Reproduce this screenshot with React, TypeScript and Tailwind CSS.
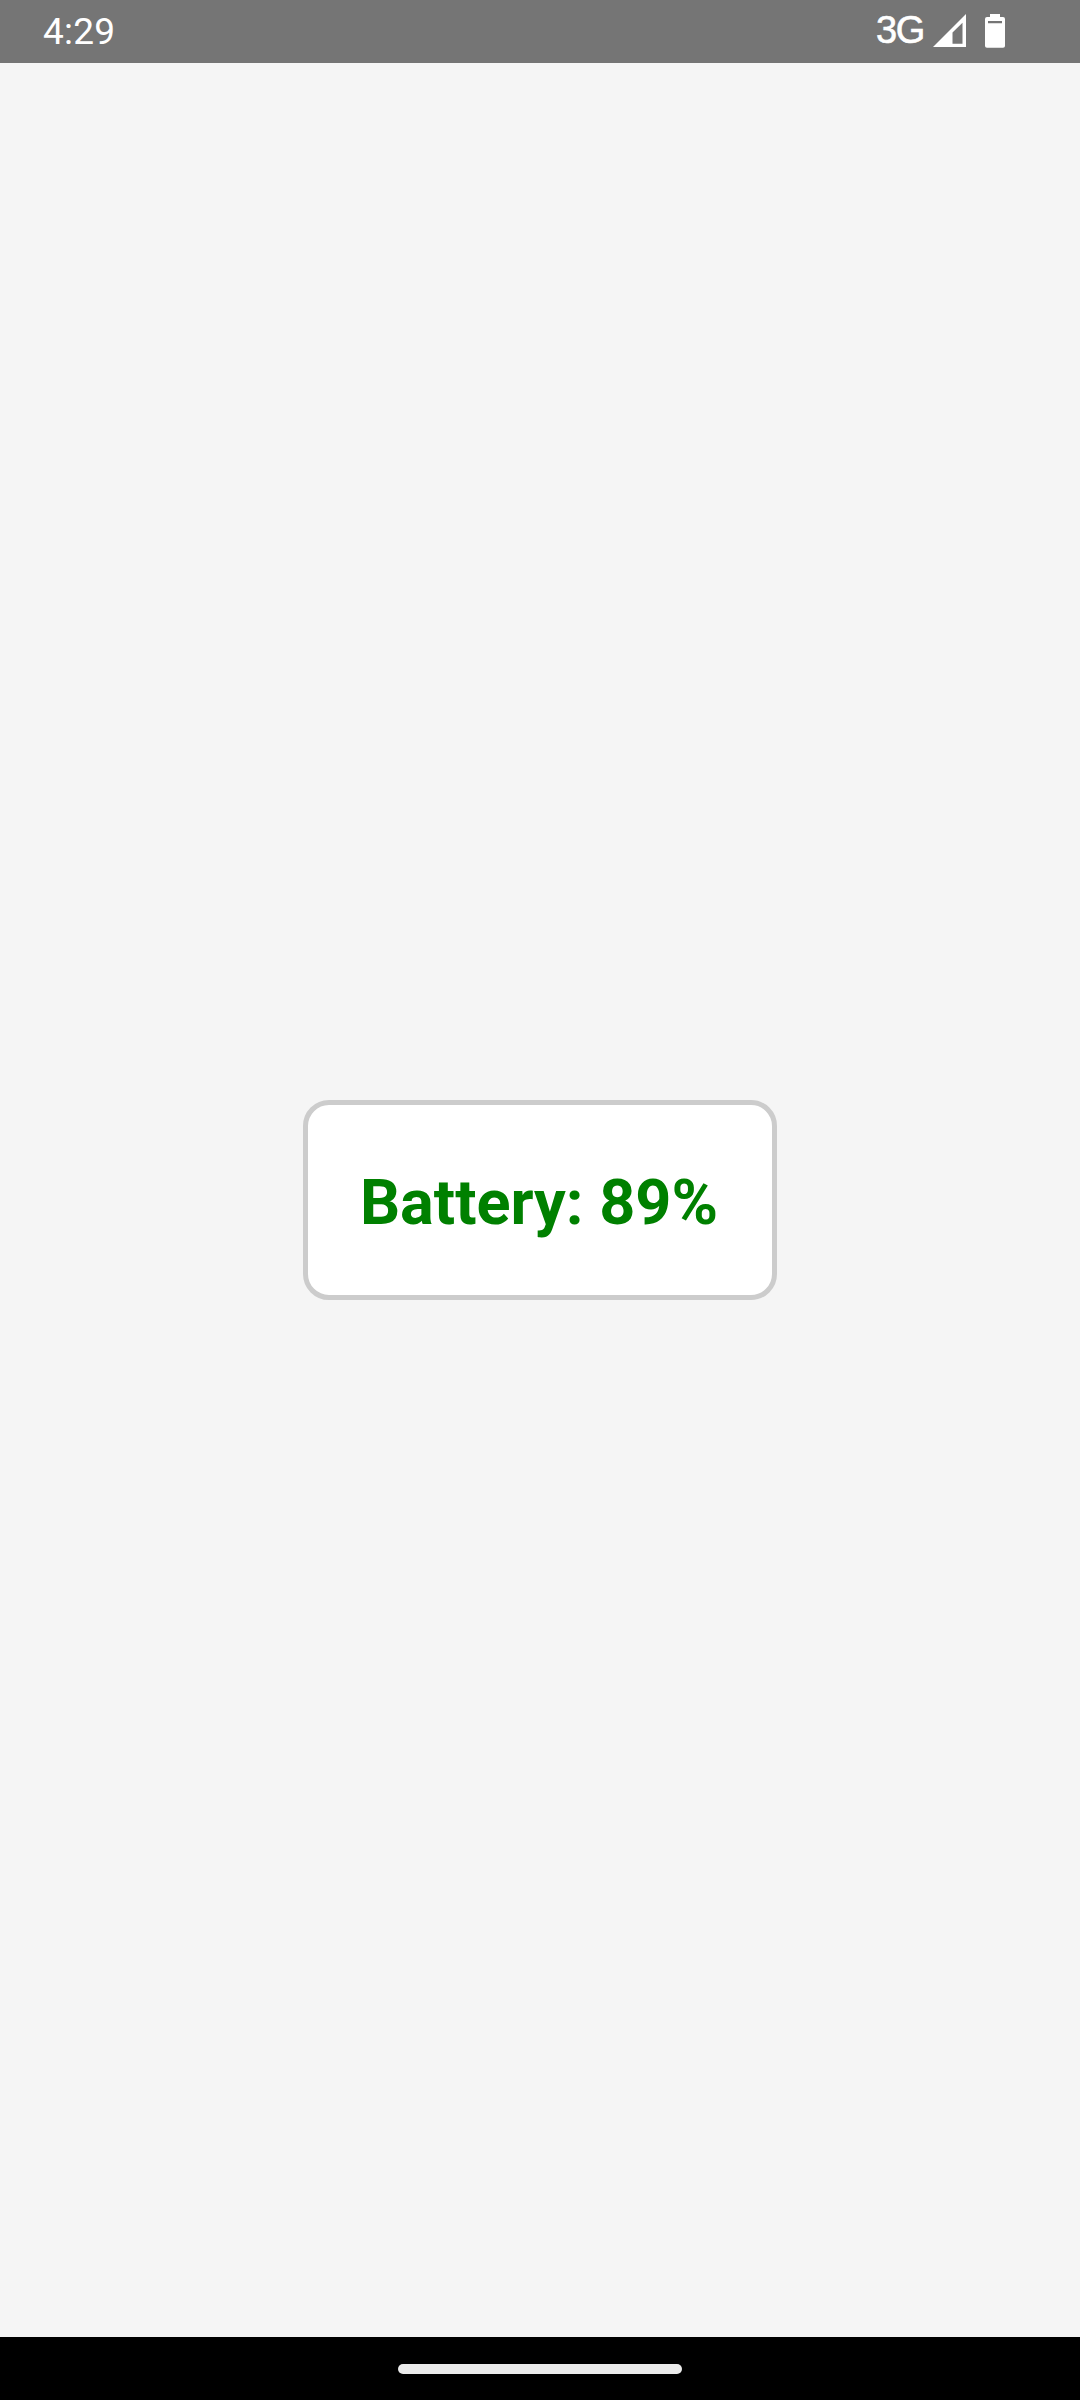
function SignalIcon() {
  return (
    <svg className="mb-px h-[33px] w-[33px]" viewBox="0 0 33 33" fill="none">
      <path fillRule="evenodd" fill="#fff" d="M0 33 L33 0 V33 Z M19.5 18.5 V29.7 H29.5 V8.8 Z" />
    </svg>
  );
}

function BatteryIcon() {
  return (
    <svg className="ml-[19px] h-[34px] w-5" viewBox="0 0 20 34" fill="none">
      <path
        fillRule="evenodd"
        fill="#fff"
        d="M5 0H15V3H18Q20 3 20 5V32Q20 33.8 18 33.8H2Q0 33.8 0 32V5Q0 3 2 3H5Z M3 7V9.2H17V7Z"
      />
    </svg>
  );
}

function StatusBar() {
  return (
    <header className="flex h-[63px] items-center justify-between bg-[#757575] pl-[43px] pr-[75px] text-[37px] leading-[43px] text-white">
      <span className="tracking-[0.2px]">4:29</span>
      <div className="flex items-center pb-px">
        <span className="w-[57px] whitespace-nowrap pb-px font-['Liberation_Sans',sans-serif] text-[38px] tracking-[-1.5px] [-webkit-text-stroke:0.6px_white]">3G</span>
        <SignalIcon />
        <BatteryIcon />
      </div>
    </header>
  );
}

export default function App() {
  return (
    <div className="flex h-[2400px] w-[1080px] flex-col overflow-hidden bg-[#f5f5f5] font-['Roboto',sans-serif]">
      <StatusBar />
      <main className="flex flex-1 items-center justify-center">
        <div className="flex h-[200px] w-[474px] items-center justify-center rounded-[26px] border-[5px] border-[#cccccc] bg-white pr-0.5 pt-1.5">
          <span className="whitespace-nowrap text-[63px] font-bold leading-[74px] text-[#008000]">Battery: 89%</span>
        </div>
      </main>
      <footer className="flex h-[63px] items-center justify-center bg-black">
        <div className="h-[10px] w-[284px] rounded-full bg-[#ebebeb]" />
      </footer>
    </div>
  );
}
